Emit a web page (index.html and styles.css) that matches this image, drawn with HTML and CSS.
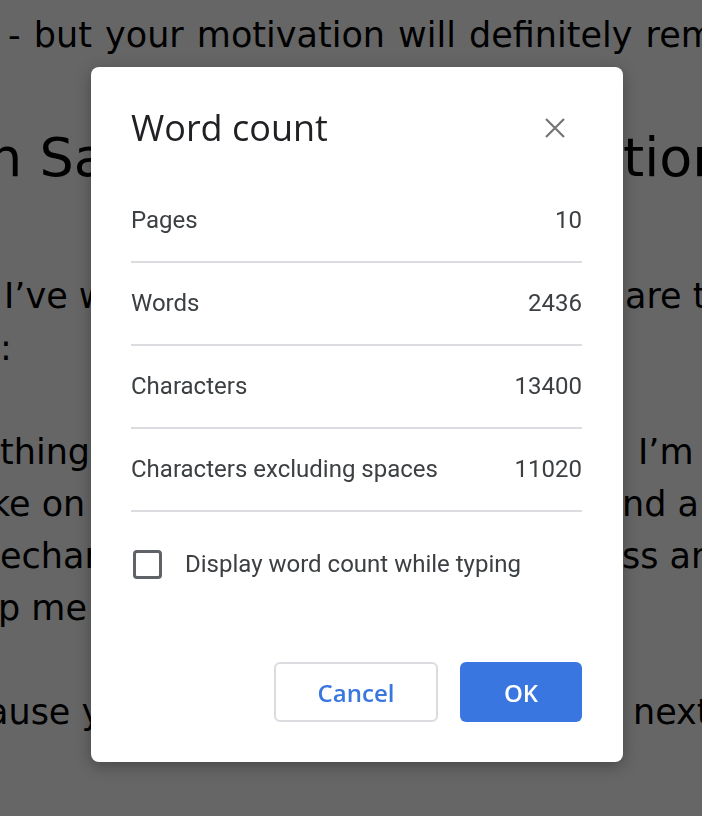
FILE: index.html
```html
<!DOCTYPE html>
<html lang="en">
<head>
	<meta charset="UTF-8">
	<title>Word count</title>
	<link rel="stylesheet" href="styles.css">
</head>
<body>
	<div class="doc">
		<p class="lead">- but your motivation will definitely remain</p>
		<h2 class="line heading"><span class="l l-n">n Sa</span><span class="r r-1">tion</span></h2>
		<p>
			<span class="line"><span class="l l-i">I’ve w</span><span class="r r-3">are t</span></span>
			<span class="line"><span class="l">:</span></span>
		</p>
		<p>
			<span class="line"><span class="l">thing</span><span class="r r-16">I’m</span></span>
			<span class="line"><span class="l l-k">ke on</span><span class="r">nd a</span></span>
			<span class="line"><span class="l">echar</span><span class="r">ss an</span></span>
			<span class="line"><span class="l l-p">p me</span></span>
		</p>
		<p>
			<span class="line"><span class="l l-a">ause y</span><span class="r r-11">next</span></span>
		</p>
	</div>

	<div class="overlay"></div>

	<div class="dialog">
		<div class="dialog-head">
			<h1 class="dialog-title">Word count</h1>
			<span class="close">
				<svg width="20" height="20" viewBox="0 0 20 20">
					<path d="M1 1L19 19M19 1L1 19" stroke="#757575" stroke-width="2.2" fill="none"/>
				</svg>
			</span>
		</div>

		<div class="stat"><span>Pages</span><span>10</span></div>
		<div class="stat"><span>Words</span><span>2436</span></div>
		<div class="stat"><span>Characters</span><span>13400</span></div>
		<div class="stat"><span>Characters excluding spaces</span><span>11020</span></div>

		<label class="option">
			<span class="check"></span>
			<span>Display word count while typing</span>
		</label>

		<div class="actions">
			<button class="btn btn-cancel">Cancel</button>
			<button class="btn btn-ok">OK</button>
		</div>
	</div>
</body>
</html>
```

FILE: styles.css
```css
html,body,div,p,h1,h2,span,label,button{
	padding: 0;
	margin: 0;
	border: 0;
}
html,body{
	overflow: hidden;
	height: 100%;
}
body{
	background-color: #fff;
	color: #000;
	font-family: "DejaVu Sans", Verdana, sans-serif;
}

/* document behind the dialog */
.doc{
	padding-top: 9px;
	font-size: 35px;
	line-height: 52px;
}
.lead{
	padding-left: 8px;
	white-space: nowrap;
	word-spacing: 2px;
}
.doc p{
	margin-bottom: 52px;
}
.line{
	display: flex;
	height: 52px;
	white-space: nowrap;
}
.heading{
	margin: 65px 0 80px;
	height: 64px;
	font-size: 54px;
	font-weight: normal;
	line-height: 64px;
}
.l{
	flex: none;
}
.l-n{ margin-left: -12px; }
.l-i{ padding-left: 4px; }
.l-k{ margin-left: -10px; }
.l-p{ margin-left: -2px; }
.l-a{ margin-left: -13px; }
.r{
	flex: none;
	width: 80px;
	margin-left: auto;
}
.r-1{ width: 79px; }
.r-3{ width: 77px; }
.r-11{ width: 69px; }
.r-16{ width: 64px; }

.overlay{
	position: fixed;
	top: 0;
	left: 0;
	right: 0;
	bottom: 0;
	background-color: rgba(0,0,0,0.6);
}

/* dialog */
.dialog{
	position: absolute;
	top: 67px;
	left: 91px;
	width: 532px;
	box-sizing: border-box;
	padding: 34px 41px 40px 40px;
	background-color: #fff;
	border-radius: 8px;
	box-shadow: 0 4px 16px rgba(0,0,0,0.3);
	font-family: Roboto, "Liberation Sans", sans-serif;
	color: #3c4043;
}
.dialog-head{
	display: flex;
	align-items: center;
	justify-content: space-between;
	height: 54px;
	margin-bottom: 25px;
}
.dialog-title{
	font-family: "Open Sans", sans-serif;
	font-size: 36px;
	font-weight: normal;
	line-height: 40px;
	color: #202124;
}
.close{
	display: flex;
	align-items: center;
	justify-content: center;
	width: 54px;
	height: 54px;
}
.stat{
	display: flex;
	justify-content: space-between;
	padding: 22px 0 23px;
	border-bottom: 2px solid #dadce0;
	font-size: 24px;
	line-height: 36px;
}
.option{
	display: flex;
	align-items: center;
	margin-top: 38px;
	font-size: 24px;
	line-height: 29px;
}
.check{
	width: 29px;
	height: 29px;
	box-sizing: border-box;
	margin-left: 2px;
	margin-right: 23px;
	border: 3px solid #5f6368;
	border-radius: 4px;
}
.actions{
	display: flex;
	justify-content: flex-end;
	margin-top: 83px;
}
.btn{
	height: 60px;
	box-sizing: border-box;
	border-radius: 6px;
	font-family: "Open Sans", sans-serif;
	font-size: 24px;
	font-weight: 600;
	cursor: pointer;
}
.btn:focus{
	outline: none;
}
.btn-cancel{
	width: 164px;
	border: 2px solid #dadce0;
	background-color: #fff;
	color: #3a76e0;
}
.btn-ok{
	width: 122px;
	margin-left: 22px;
	background-color: #3a76e0;
	color: #fff;
}
```
